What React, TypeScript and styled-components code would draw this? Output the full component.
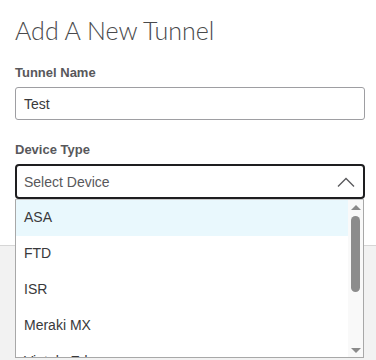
import React from "react";
import styled, { createGlobalStyle } from "styled-components";

const Global = createGlobalStyle`
  html, body { margin: 0; padding: 0; background: #ffffff; }
  body { font-family: "Liberation Sans", Arial, sans-serif; }
  * { box-sizing: border-box; }
`;

const Page = styled.div`
  width: 376px;
  height: 360px;
  display: flex;
  flex-direction: column;
  overflow: hidden;
`;

const Form = styled.div`
  height: 245px;
  padding: 15px 11px 0 15px;
  background: #ffffff;
  display: flex;
  flex-direction: column;
`;

const Title = styled.h1`
  margin: 0;
  font-family: "Lato", "Liberation Sans", sans-serif;
  font-weight: 300;
  font-size: 25px;
  line-height: 30px;
  color: #4a4a4c;
`;

const Field = styled.div<{ $top: number }>`
  margin-top: ${(p) => p.$top}px;
  display: flex;
  flex-direction: column;
  position: relative;
`;

const Label = styled.label`
  font-weight: 700;
  font-size: 13px;
  line-height: 15px;
  color: #58585b;
  margin-bottom: 7px;
`;

const TextInput = styled.div`
  height: 33px;
  border: 1px solid #9e9ea2;
  border-radius: 3px;
  padding: 0 8px;
  display: flex;
  align-items: center;
  font-size: 14px;
  color: #39393b;
`;

const Select = styled.div`
  height: 35px;
  border: 2px solid #1e1e20;
  border-radius: 4px;
  padding: 0 8px 0 7px;
  display: flex;
  align-items: center;
  justify-content: space-between;
  font-size: 14px;
  color: #58585b;
`;

const Chevron = styled.svg`
  width: 18px;
  height: 10px;
`;

const Dropdown = styled.div`
  position: absolute;
  left: 0;
  top: 57px;
  width: 349px;
  height: 159px;
  border: 1px solid #a8a8a8;
  border-top-color: #c8c8c8;
  background: #ffffff;
  display: flex;
  overflow: hidden;
  z-index: 2;
`;

const List = styled.ul`
  flex: 1;
  margin: 0;
  padding: 0;
  list-style: none;
  overflow: hidden;
`;

const Option = styled.li<{ $active?: boolean }>`
  height: 36px;
  padding: 0 8px 2px;
  display: flex;
  align-items: center;
  font-size: 14px;
  color: #39393b;
  background: ${(p) => (p.$active ? "#e9f8fd" : "#ffffff")};
`;

const Scrollbar = styled.div`
  width: 15px;
  background: #f9f9f9;
  display: flex;
  flex-direction: column;
  align-items: center;
`;

const Arrow = styled.div<{ $down?: boolean }>`
  width: 0;
  height: 0;
  margin: ${(p) => (p.$down ? "auto 0 4px" : "5px 0 0")};
  border-left: 5px solid transparent;
  border-right: 5px solid transparent;
  ${(p) =>
    p.$down
      ? "border-top: 5px solid #8a8a8a;"
      : "border-bottom: 5px solid #8a8a8a;"}
`;

const Thumb = styled.div`
  width: 9px;
  height: 76px;
  margin-top: 6px;
  border-radius: 5px;
  background: #8c8c8c;
`;

const Footer = styled.div`
  flex: 1;
  border-top: 1px solid #d6d6d6;
  background: #f2f2f2;
`;

const options = ["ASA", "FTD", "ISR", "Meraki MX", "Viptela Edge"];

export default function App() {
  return (
    <>
      <Global />
      <Page>
        <Form>
          <Title>Add A New Tunnel</Title>
          <Field $top={20}>
            <Label>Tunnel Name</Label>
            <TextInput>Test</TextInput>
          </Field>
          <Field $top={22}>
            <Label>Device Type</Label>
            <Select>
              <span>Select Device</span>
              <Chevron viewBox="0 0 18 10">
                <path d="M1 9.5 L9 1.5 L17 9.5" fill="none" stroke="#58585b" strokeWidth="1.3" />
              </Chevron>
            </Select>
            <Dropdown>
              <List>
                {options.map((o, i) => (
                  <Option key={o} $active={i === 0}>
                    {o}
                  </Option>
                ))}
              </List>
              <Scrollbar>
                <Arrow />
                <Thumb />
                <Arrow $down />
              </Scrollbar>
            </Dropdown>
          </Field>
        </Form>
        <Footer />
      </Page>
    </>
  );
}
